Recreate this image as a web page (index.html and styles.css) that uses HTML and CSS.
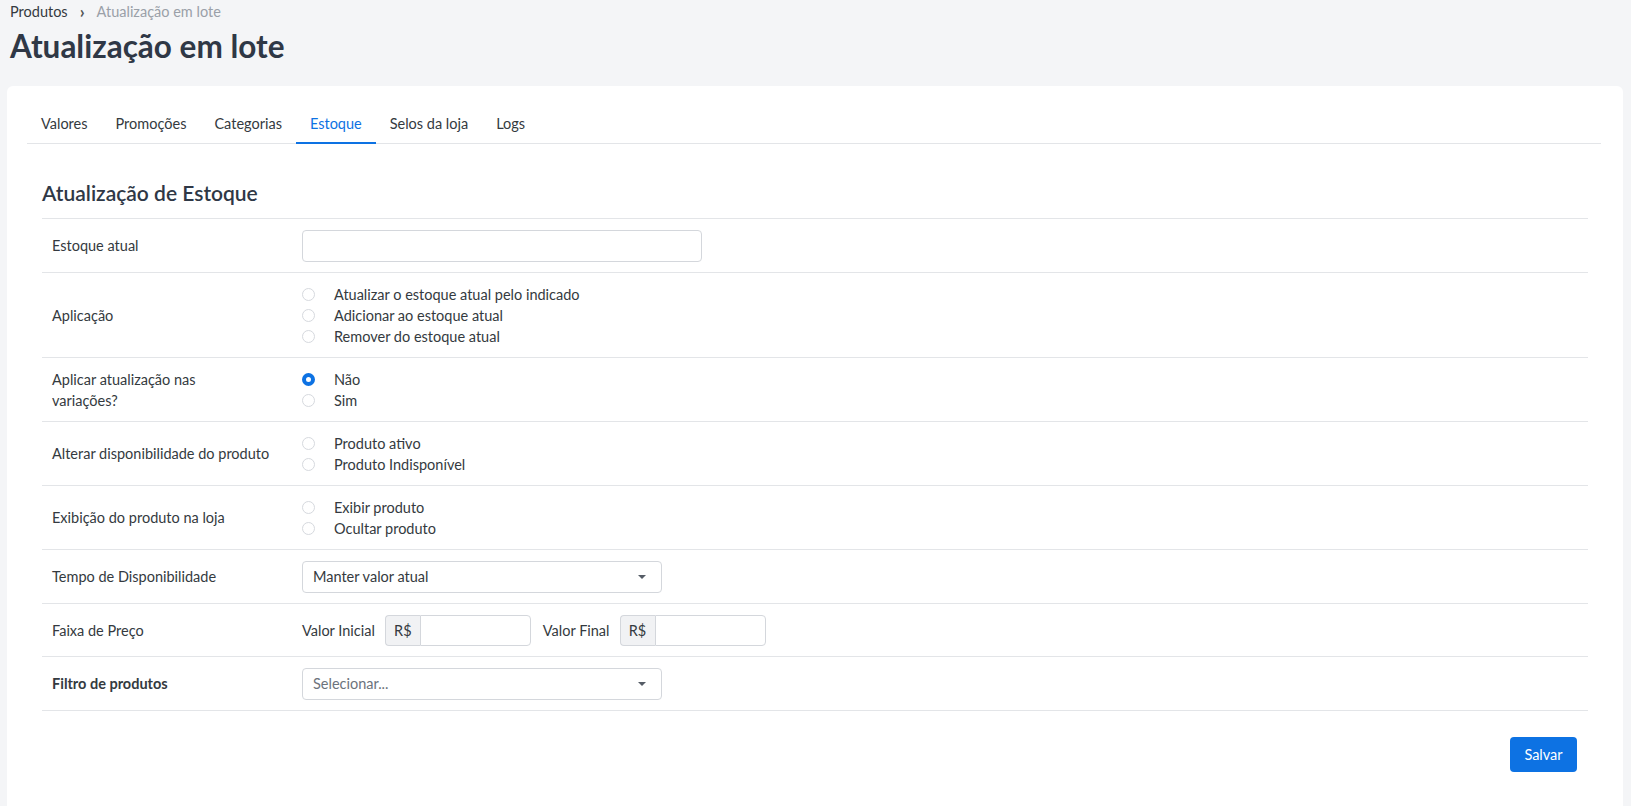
FILE: index.html
```html
<!DOCTYPE html>
<html lang="pt-BR">
<head>
    <meta charset="UTF-8">
    <meta name="viewport" content="width=device-width, initial-scale=1.0">
    <title>Atualização em lote</title>
    <link rel="stylesheet" href="styles.css">
</head>
<body>
    <div class="page-head">
        <nav class="breadcrumb">
            <a href="#">Produtos</a>
            <span class="sep">&rsaquo;</span>
            <span class="current">Atualização em lote</span>
        </nav>
        <h1 class="page-title">Atualização em lote</h1>
    </div>

    <div class="card">
        <ul class="tabs">
            <li><a href="#">Valores</a></li>
            <li><a href="#">Promoções</a></li>
            <li><a href="#">Categorias</a></li>
            <li><a href="#" class="active">Estoque</a></li>
            <li><a href="#">Selos da loja</a></li>
            <li><a href="#">Logs</a></li>
        </ul>

        <div class="panel">
            <h2 class="section-title">Atualização de Estoque</h2>

            <div class="form-rows">
                <div class="form-row">
                    <div class="row-label">Estoque atual</div>
                    <div class="row-control">
                        <input type="text" class="input input-wide">
                    </div>
                </div>

                <div class="form-row">
                    <div class="row-label">Aplicação</div>
                    <div class="row-control radios">
                        <label class="radio"><span class="dot"></span>Atualizar o estoque atual pelo indicado</label>
                        <label class="radio"><span class="dot"></span>Adicionar ao estoque atual</label>
                        <label class="radio"><span class="dot"></span>Remover do estoque atual</label>
                    </div>
                </div>

                <div class="form-row">
                    <div class="row-label">Aplicar atualização nas<br>variações?</div>
                    <div class="row-control radios">
                        <label class="radio"><span class="dot checked"></span>Não</label>
                        <label class="radio"><span class="dot"></span>Sim</label>
                    </div>
                </div>

                <div class="form-row">
                    <div class="row-label">Alterar disponibilidade do produto</div>
                    <div class="row-control radios">
                        <label class="radio"><span class="dot"></span>Produto ativo</label>
                        <label class="radio"><span class="dot"></span>Produto Indisponível</label>
                    </div>
                </div>

                <div class="form-row">
                    <div class="row-label">Exibição do produto na loja</div>
                    <div class="row-control radios">
                        <label class="radio"><span class="dot"></span>Exibir produto</label>
                        <label class="radio"><span class="dot"></span>Ocultar produto</label>
                    </div>
                </div>

                <div class="form-row">
                    <div class="row-label">Tempo de Disponibilidade</div>
                    <div class="row-control">
                        <div class="select">Manter valor atual<span class="caret"></span></div>
                    </div>
                </div>

                <div class="form-row">
                    <div class="row-label">Faixa de Preço</div>
                    <div class="row-control price-range">
                        <span class="range-label">Valor Inicial</span>
                        <div class="input-group">
                            <span class="addon">R$</span>
                            <input type="text" class="input">
                        </div>
                        <span class="range-label">Valor Final</span>
                        <div class="input-group">
                            <span class="addon">R$</span>
                            <input type="text" class="input">
                        </div>
                    </div>
                </div>

                <div class="form-row">
                    <div class="row-label bold">Filtro de produtos</div>
                    <div class="row-control">
                        <div class="select placeholder">Selecionar...<span class="caret"></span></div>
                    </div>
                </div>
            </div>

            <div class="actions">
                <button class="btn-primary">Salvar</button>
            </div>
        </div>
    </div>
</body>
</html>
```

FILE: styles.css
```css
body {
    margin: 0;
    background: #f4f5f7;
    font-family: 'Lato', 'Noto Sans', sans-serif;
    font-size: 14.5px;
    line-height: 21px;
    color: #343a40;
}

/* header */
.page-head {
    padding: 1px 10px 0;
}

.breadcrumb {
    display: flex;
    align-items: center;
    gap: 12px;
    line-height: 21px;
}

.breadcrumb a {
    color: #343a40;
    text-decoration: none;
}

.breadcrumb .sep {
    font-size: 17px;
    font-weight: bold;
    color: #555;
}

.breadcrumb .current {
    color: #9aa0a8;
}

.page-title {
    margin: 4px 0 0;
    font-size: 31.5px;
    line-height: 40px;
    font-weight: 700;
    color: #2f3846;
}

/* card */
.card {
    background: #fff;
    margin: 20px 8px 0 7px;
    border-radius: 6px 6px 0 0;
    padding: 19px 22px 40px 20px;
    min-height: 700px;
}

.tabs {
    list-style: none;
    margin: 0;
    padding: 0;
    display: flex;
    border-bottom: 1px solid #e3e5e8;
}

.tabs a {
    display: block;
    padding: 8px 14px 8px;
    color: #343a40;
    text-decoration: none;
    border-bottom: 2px solid transparent;
    margin-bottom: -1px;
}

.tabs a.active {
    color: #0d72e3;
    border-bottom-color: #0d72e3;
}

.panel {
    margin: 0 13px 0 15px;
}

.section-title {
    margin: 37px 0 13px;
    font-size: 21px;
    line-height: 24px;
    font-weight: 600;
    color: #2f3846;
}

/* form rows */
.form-row {
    display: grid;
    grid-template-columns: 260px 1fr;
    align-items: center;
    border-top: 1px solid #e3e5e8;
    padding: 10.5px 0;
}

.form-row:last-child {
    border-bottom: 1px solid #e3e5e8;
}

.row-label {
    padding-left: 10px;
}

.row-label.bold {
    font-weight: 700;
}

.radios {
    display: flex;
    flex-direction: column;
}

.radio {
    display: flex;
    align-items: center;
    gap: 19px;
}

.dot {
    width: 13px;
    height: 13px;
    box-sizing: border-box;
    border: 1px solid #d6d9de;
    border-radius: 50%;
    background: #fff;
}

.dot.checked {
    border: 4px solid #0d72e3;
}

.input {
    box-sizing: border-box;
    height: 32px;
    border: 1px solid #d4d7dc;
    border-radius: 4px;
    padding: 0 10px;
    font: inherit;
    outline: none;
}

.input-wide {
    width: 400px;
    display: block;
}

.select {
    box-sizing: border-box;
    width: 360px;
    height: 32px;
    border: 1px solid #d4d7dc;
    border-radius: 4px;
    padding: 0 10px;
    display: flex;
    align-items: center;
    justify-content: space-between;
}

.select.placeholder {
    color: #6c737c;
}

.caret {
    width: 0;
    height: 0;
    border-left: 4px solid transparent;
    border-right: 4px solid transparent;
    border-top: 4px solid #555c66;
    margin-right: 5px;
}

.price-range {
    display: flex;
    align-items: center;
}

.range-label {
    margin-right: 10px;
}

.input-group {
    display: flex;
    width: 146px;
    height: 31px;
    margin-right: 12px;
}

.addon {
    width: 35px;
    box-sizing: border-box;
    background: #f1f2f4;
    border: 1px solid #d4d7dc;
    border-right: none;
    border-radius: 4px 0 0 4px;
    display: flex;
    align-items: center;
    justify-content: center;
}

.input-group .input {
    flex: 1;
    width: 0;
    height: 31px;
    border-radius: 0 4px 4px 0;
}

.actions {
    display: flex;
    justify-content: flex-end;
    padding: 26px 11px 0 0;
}

.btn-primary {
    background: #0d72e3;
    color: #fff;
    border: none;
    border-radius: 4px;
    font: inherit;
    width: 67px;
    height: 35px;
    cursor: pointer;
}
```
